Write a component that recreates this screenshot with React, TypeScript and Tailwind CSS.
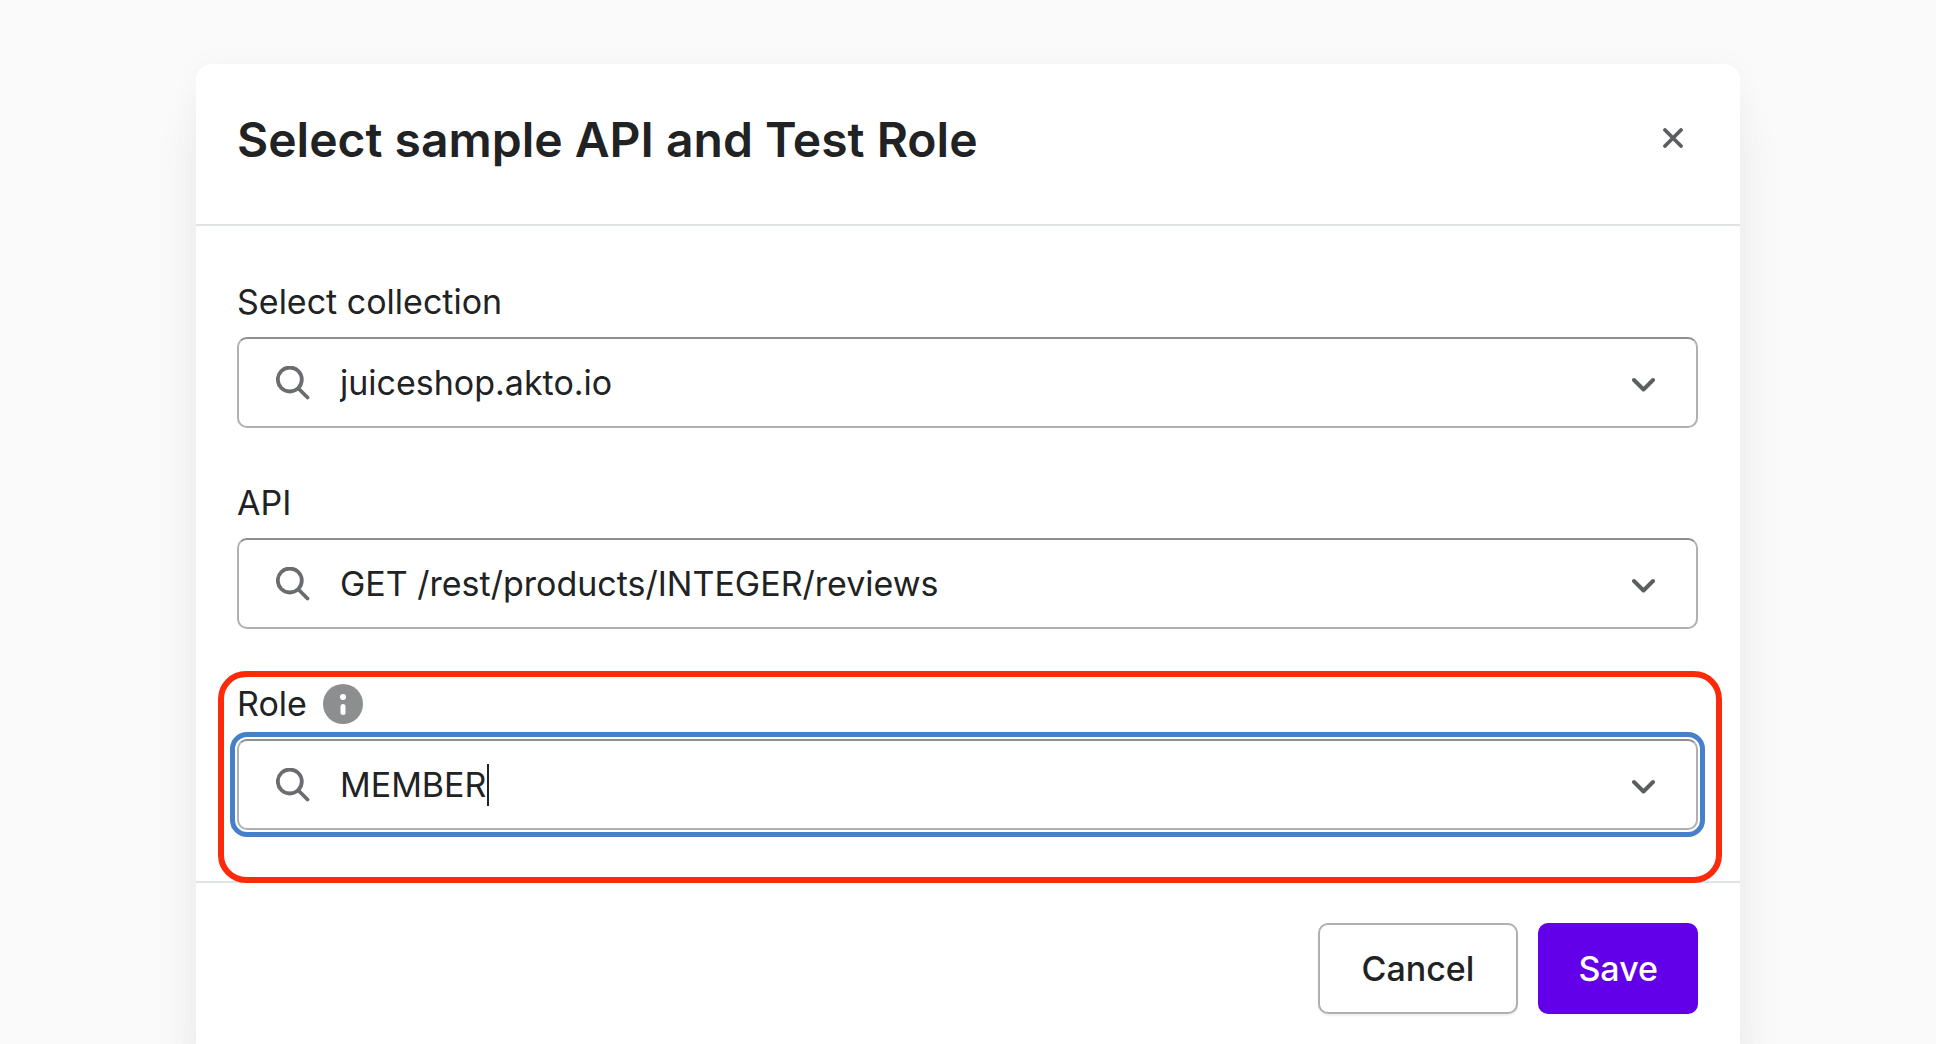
import React, { useState } from "react";

interface FieldProps {
  id: string,
  label: string,
  initial: string,
  info?: boolean,
  focused?: boolean,
}

const SearchIcon: React.FC = () => (
  <svg className="w-[34px] h-[34px] shrink-0" viewBox="0 0 34 34" fill="none" stroke="#6a6c6f" strokeWidth="3.800" strokeLinecap="round">
    <circle cx="13.800" cy="13.500" r="12" />
    <path d="M22.500 22.500l9 9" />
  </svg>
);

const ChevronIcon: React.FC = () => (
  <svg className="w-6 h-5 shrink-0" viewBox="0 0 24 20" fill="none" stroke="#5c5f62" strokeWidth="4" strokeLinecap="round" strokeLinejoin="round">
    <path d="M2 7l9.500 9.500L21 7" />
  </svg>
);

const InfoIcon: React.FC = () => (
  <svg className="w-10 h-10" viewBox="0 0 40 40">
    <circle cx="20" cy="20" r="20" fill="#8c8e90" />
    <circle cx="20" cy="13" r="3" fill="#fff" />
    <rect x="17.500" y="20" width="5" height="11" rx="2.500" fill="#fff" />
  </svg>
);

const SearchField: React.FC<FieldProps> = ({ id, label, initial, info, focused }) => {
  const [value, setValue] = useState(initial);

  return (
    <div className="relative flex flex-col gap-[10px]">
      {/** Highlight around the field */}
      {focused && (
        <div className="absolute -left-[19px] -right-6 -top-2 -bottom-[53px] rounded-[28px] border-6 border-[#fa2a0a] pointer-events-none" />
      )}
      <div className="flex items-center gap-4 h-[50px]">
        <label htmlFor={id}>{label}</label>
        {info && <InfoIcon />}
      </div>
      <div
        className={
          "relative flex items-center h-[91px] pl-[37px] pr-10 rounded-[10px] border-2 border-[#aeb0b4] border-t-[#8c8e91] bg-white" +
          (focused ? " outline-5 outline-offset-2 outline-[#467fca]" : "")
        }
      >
        <SearchIcon />
        <input
          id={id}
          type="text"
          value={value}
          onChange={(e) => setValue(e.target.value)}
          className="flex-1 min-w-0 ml-[30px] bg-transparent outline-none"
        />
        {focused && <span className="absolute left-[248px] top-[23px] w-[2px] h-[42px] bg-[#202223]" />}
        <ChevronIcon />
      </div>
    </div>
  );
};

const App: React.FC = () => {
  return (
    <div className="flex flex-col min-h-screen pt-16 bg-[#fafafa] text-[34px] leading-[50px] text-[#202223] font-['Inter',sans-serif] overflow-hidden">
      <div
        role="dialog"
        aria-labelledby="modal-title"
        className="flex-1 w-full max-w-[1544px] mx-auto rounded-t-2xl bg-white shadow-[0_50px_50px_rgba(0,0,0,0.06),0_0_30px_rgba(0,0,0,0.03)]"
      >
        {/** Header */}
        <div className="flex items-start justify-between h-[162px] pt-11 pl-[41px] pr-[47px] border-b-2 border-[#dfe3e4]">
          <h2 id="modal-title" className="text-[48px] leading-[64px] font-semibold">
            Select sample API and Test Role
          </h2>
          <button type="button" aria-label="Close" className="flex items-center justify-center w-[40px] h-[60px]">
            <svg className="w-5 h-5" viewBox="0 0 20 20" fill="none" stroke="#5c5f62" strokeWidth="3.800" strokeLinecap="round">
              <path d="M2 2l16 16M18 2L2 18" />
            </svg>
          </button>
        </div>

        {/** Fields */}
        <div className="flex flex-col gap-[50px] pl-[41px] pr-[42px] pt-[51px] pb-[51px]">
          <SearchField id="collection" label="Select collection" initial="juiceshop.akto.io" />
          <SearchField id="api" label="API" initial="GET /rest/products/INTEGER/reviews" />
          <SearchField id="role" label="Role" initial="MEMBER" info focused />
        </div>

        {/** Footer */}
        <div className="flex justify-end gap-5 pl-[41px] pr-[42px] pt-10 pb-10 border-t-2 border-[#dfe3e4] font-medium">
          <button type="button" className="h-[91px] px-[42px] rounded-[10px] border-2 border-[#aeb0b4] bg-white shadow-[0_2px_2px_rgba(0,0,0,0.06)]">
            Cancel
          </button>
          <button type="button" className="h-[91px] px-10 rounded-[10px] bg-[#6200ea] text-white">
            Save
          </button>
        </div>
      </div>
    </div>
  );
};

export default App;
